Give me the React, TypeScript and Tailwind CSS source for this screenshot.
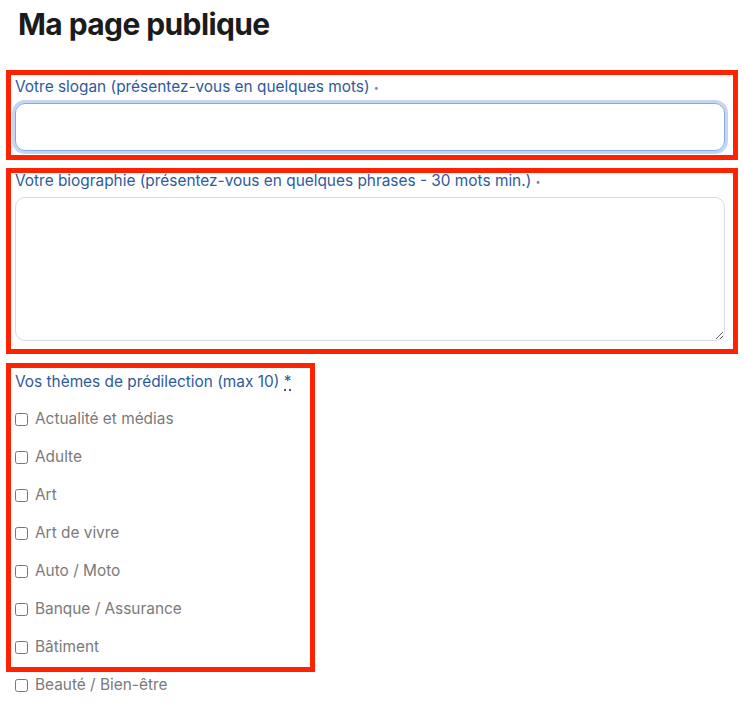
const themes = [
  "Actualité et médias",
  "Adulte",
  "Art",
  "Art de vivre",
  "Auto / Moto",
  "Banque / Assurance",
  "Bâtiment",
  "Beauté / Bien-être",
];

export default function App() {
  return (
    <div
      className="relative w-[744px] h-[713px] overflow-hidden bg-white"
      style={{ fontFamily: "Inter, 'Noto Sans', sans-serif" }}
    >
      <div className="px-[15px]">
        <h1 className="pl-[3px] pt-[6px] text-[30px] leading-[36px] font-bold tracking-[-0.6px] text-[#1b1b1b]">
          Ma page publique
        </h1>

        <label className="mt-[35px] block h-[20px] text-[15.4px] leading-[20px] text-[#2e5a9c]">
          Votre slogan (présentez-vous en quelques mots) <span className="text-[9px] leading-none align-middle text-[#6f86ad]">•</span>
        </label>
        <input
          type="text"
          className="mt-[6px] block h-[48px] w-[710px] rounded-[10px] border border-[#86a9e6] px-3 outline-none shadow-[0_0_0_3px_rgba(172,197,236,0.7)]"
        />

        <label className="mt-[20px] block h-[20px] text-[15.4px] leading-[20px] text-[#2e5a9c]">
          Votre biographie (présentez-vous en quelques phrases - 30 mots min.) <span className="text-[9px] leading-none align-middle text-[#6f86ad]">•</span>
        </label>
        <textarea className="mt-[6px] block h-[144px] w-[710px] rounded-[10px] border border-[#d8dce2] px-3 py-2 outline-none" />

        <div className="mt-[31px] h-[20px] text-[15.4px] leading-[20px] text-[#2e5a9c]">
          Vos thèmes de prédilection (max 10){" "}
          <abbr className="no-underline border-b-2 border-dotted border-[#2e5a9c] leading-[14px] inline-block">*</abbr>
        </div>

        <div className="mt-[8px] flex flex-col">
          {themes.map((t) => (
            <label key={t} className="flex h-[38px] items-center gap-[7px] text-[15.4px] text-[#7a7a7a]">
              <input type="checkbox" className="m-0 h-[13px] w-[13px]" />
              <span>{t}</span>
            </label>
          ))}
        </div>
      </div>

      {/* annotation boxes */}
      <div className="pointer-events-none absolute left-[6px] top-[70px] h-[90px] w-[732px] border-[5px] border-[#ff2200]" />
      <div className="pointer-events-none absolute left-[6px] top-[168px] h-[186px] w-[732px] border-[5px] border-[#ff2200]" />
      <div className="pointer-events-none absolute left-[6px] top-[363px] h-[309px] w-[309px] border-[5px] border-[#ff2200]" />
    </div>
  );
}
